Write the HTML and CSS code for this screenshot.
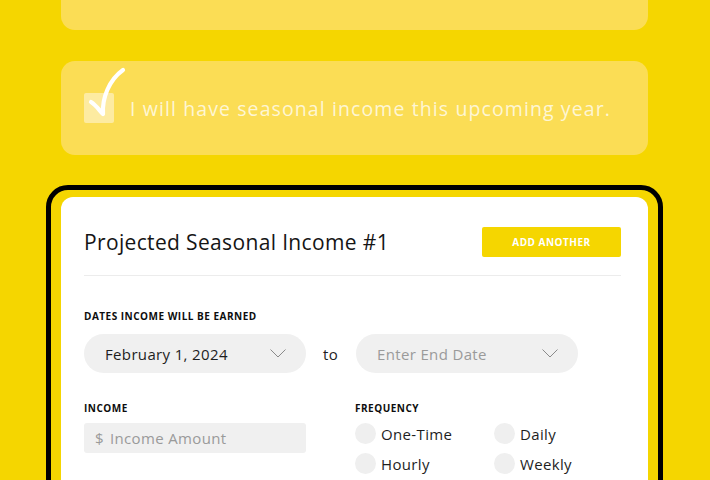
FILE: index.html
```html
<!DOCTYPE html>
<html lang="en">
<head>
<meta charset="utf-8">
<title>Seasonal Income</title>
<link rel="stylesheet" href="styles.css">
</head>
<body>
<main class="page">
  <div class="note-card note-card--top"></div>

  <label class="note-card check-row">
    <span class="checkbox">
      <svg class="checkmark" width="44" height="56" viewBox="0 0 44 56" aria-hidden="true">
        <path d="M6 39 C 11 42, 14 47, 18 51 C 17 35, 24 17, 38 7" fill="none" stroke="#fff" stroke-width="4.2" stroke-linecap="round" stroke-linejoin="round"/>
      </svg>
    </span>
    <span class="check-text">I will have seasonal income this upcoming year.</span>
  </label>

  <section class="frame">
    <div class="panel">
      <header class="panel-head">
        <h2 class="panel-title">Projected Seasonal Income #1</h2>
        <button class="btn-add" type="button">ADD ANOTHER</button>
      </header>

      <div class="field-label dates-label">DATES INCOME WILL BE EARNED</div>
      <div class="date-row">
        <div class="pill">
          <span class="pill-text">February 1, 2024</span>
          <svg class="chev" width="16" height="9" viewBox="0 0 16 9" aria-hidden="true"><path d="M0.5 0.5 L8 8 L15.5 0.5" fill="none" stroke="#8a8a8a" stroke-width="1"/></svg>
        </div>
        <span class="to">to</span>
        <div class="pill">
          <span class="pill-text placeholder">Enter End Date</span>
          <svg class="chev" width="16" height="9" viewBox="0 0 16 9" aria-hidden="true"><path d="M0.5 0.5 L8 8 L15.5 0.5" fill="none" stroke="#8a8a8a" stroke-width="1"/></svg>
        </div>
      </div>

      <div class="lower">
        <div class="income-col">
          <div class="field-label low-label">INCOME</div>
          <div class="money-input"><span class="dollar">$</span><span class="placeholder">Income Amount</span></div>
        </div>
        <div class="freq-col">
          <div class="field-label low-label">FREQUENCY</div>
          <div class="radio-grid">
            <div class="radio"><span class="dot"></span>One-Time</div>
            <div class="radio"><span class="dot"></span>Daily</div>
            <div class="radio"><span class="dot"></span>Hourly</div>
            <div class="radio"><span class="dot"></span>Weekly</div>
          </div>
        </div>
      </div>
    </div>
  </section>
</main>
</body>
</html>
```
FILE: styles.css
```css
* { box-sizing: border-box; }
html, body { margin: 0; padding: 0; }
body {
  background: #f5d600;
  font-family: "Open Sans", "Noto Sans", sans-serif;
  color: #1c1c1c;
  height: 480px;
  overflow: hidden;
}
.page {
  display: flex;
  flex-direction: column;
  padding-left: 46px;
  width: 663px;
}
.note-card {
  background: #fbdd55;
  margin-left: 15px;
  width: 587px;
  border-radius: 14px;
}
.note-card--top {
  height: 30px;
  border-radius: 0 0 14px 14px;
}
.check-row {
  margin-top: 31px;
  height: 94px;
  display: flex;
  align-items: center;
  padding-left: 23px;
  gap: 16px;
}
.checkbox {
  position: relative;
  width: 30px;
  height: 30px;
  border-radius: 2px;
  background: #fdeba1;
  flex: none;
}
.checkmark {
  position: absolute;
  left: 1px;
  top: -30px;
}
.check-text {
  font-size: 19.5px;
  color: rgba(255, 255, 255, 0.75);
  letter-spacing: 1.1px;
  padding-top: 1px;
}
.frame {
  margin-top: 30px;
  border: 5px solid #000;
  border-radius: 22px;
  padding: 7px 10px 0 10px;
  height: 320px;
}
.panel {
  background: #fff;
  border-radius: 12px;
  padding: 0 27px 40px 23px;
  height: 310px;
}
.panel-head {
  display: flex;
  justify-content: space-between;
  align-items: center;
  padding: 30px 0 18px;
  border-bottom: 1px solid #ececec;
}
.panel-title {
  margin: 0;
  font-size: 21px;
  font-weight: 400;
  color: #151515;
  letter-spacing: 0.35px;
}
.btn-add {
  width: 139px;
  height: 30px;
  border: 0;
  border-radius: 2px;
  background: #f5d600;
  color: #fff;
  font-family: inherit;
  font-weight: 700;
  font-size: 10px;
  letter-spacing: 0.5px;
  padding: 0;
}
.field-label {
  font-size: 10px;
  line-height: 12px;
  font-weight: 700;
  color: #0d0d0d;
  letter-spacing: 0.5px;
}
.dates-label { margin-top: 34px; }
.date-row {
  display: flex;
  align-items: center;
  gap: 17px;
  margin-top: 12px;
}
.pill {
  width: 222px;
  height: 39px;
  border-radius: 20px;
  background: #f0f0f0;
  display: flex;
  align-items: center;
  justify-content: space-between;
  padding: 0 20px 0 21px;
}
.pill-text {
  font-size: 15px;
  color: #1e1e1e;
  letter-spacing: 0.35px;
}
.placeholder { color: #9a9a9a; }
.chev { display: block; }
.to {
  font-size: 15px;
  width: 16px;
  color: #1e1e1e;
  letter-spacing: 0.35px;
}
.lower {
  display: grid;
  grid-template-columns: 222px 1fr;
  column-gap: 49px;
  margin-top: 29px;
}
.low-label { margin-bottom: 9px; }
.money-input {
  height: 30px;
  border-radius: 3px;
  background: #f0f0f0;
  display: flex;
  align-items: center;
  padding-left: 11px;
  font-size: 15px;
  color: #9a9a9a;
  letter-spacing: 0.35px;
}
.dollar { margin-right: 6px; }
.radio-grid {
  display: grid;
  grid-template-columns: 139px 1fr;
  row-gap: 9px;
  margin-top: 7px;
}
.radio {
  display: flex;
  align-items: center;
  gap: 5px;
  font-size: 15px;
  color: #1e1e1e;
  height: 21px;
  letter-spacing: 0.35px;
}
.dot {
  width: 21px;
  height: 21px;
  border-radius: 50%;
  background: #efefef;
  flex: none;
}
```
